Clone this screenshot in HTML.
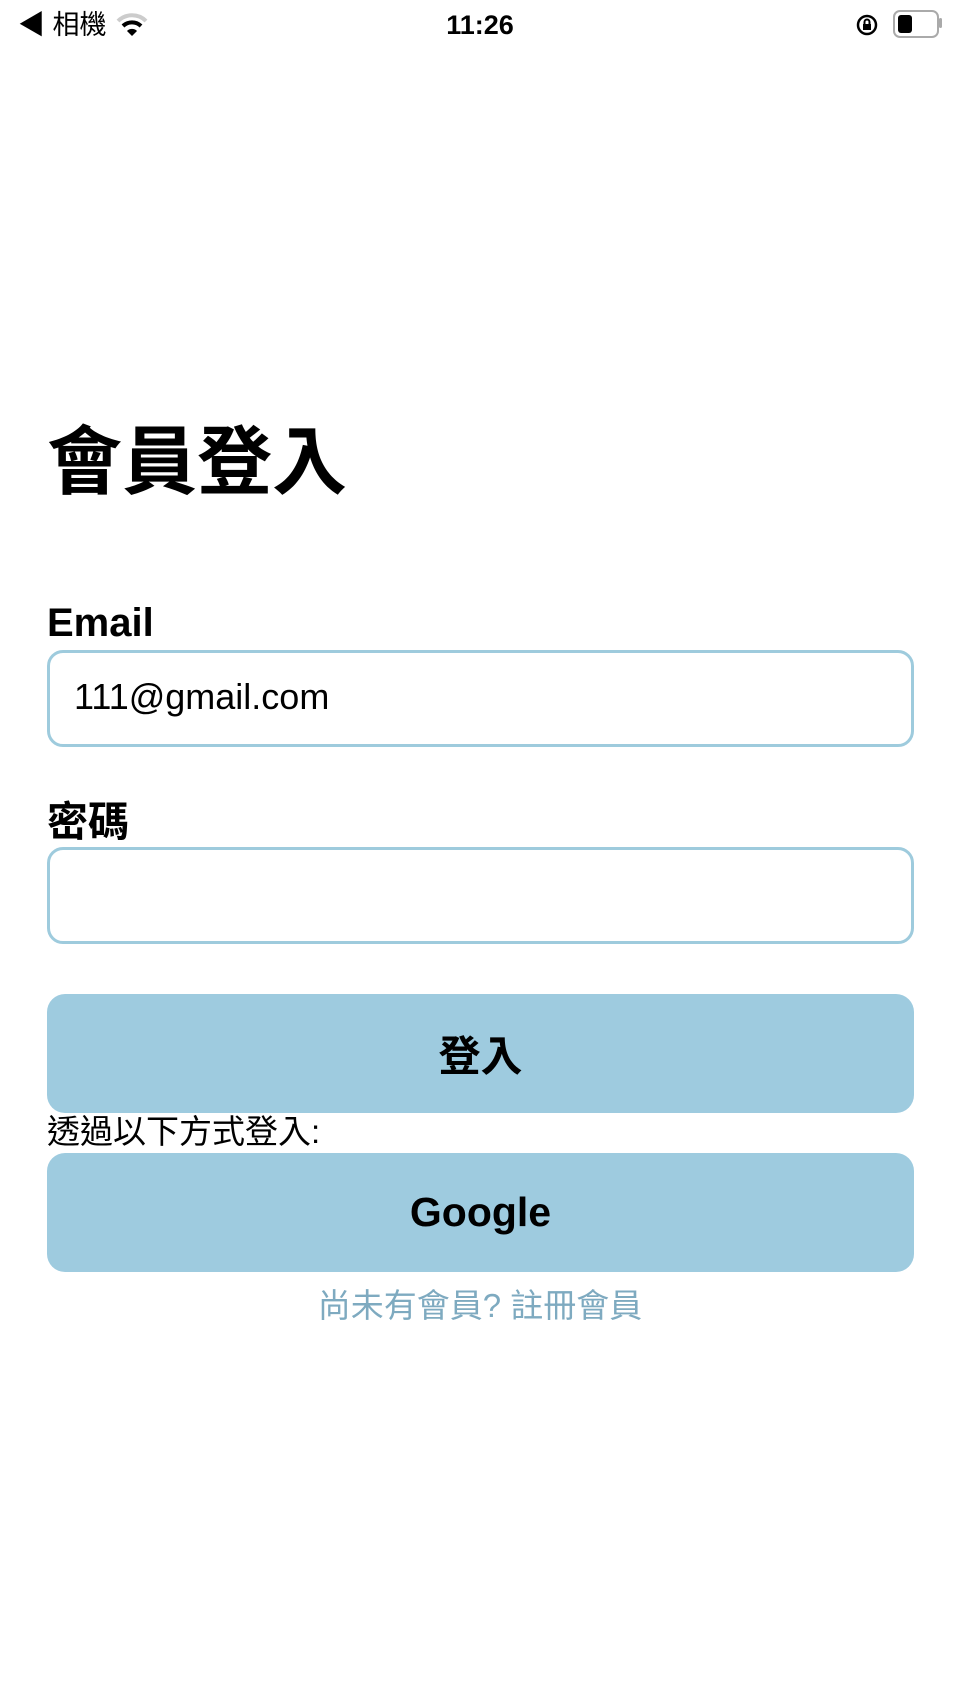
<!DOCTYPE html>
<html><head><meta charset="utf-8"><style>
body{margin:0;width:960px;height:1706px;background:#fff;position:relative;font-family:"Liberation Sans","Noto Sans CJK TC",sans-serif;color:#000;overflow:hidden}
.a{position:absolute}
.inp{position:absolute;left:47px;width:861px;height:91px;border:3px solid #9ecbdd;border-radius:16px}
.btn{position:absolute;left:47px;width:867px;height:119px;background:#9ecbdf;border-radius:18px;display:flex;align-items:center;justify-content:center;font-weight:bold}
</style></head><body>
<div class="a" style="left:18px;top:8px;font-size:27px;line-height:34px">◀ 相機</div>
<svg class="a" style="left:116px;top:10px" width="32" height="28" viewBox="0 0 32 28"><path d="M2 11a20 20 0 0 1 28 0" stroke="#ccc" stroke-width="4" fill="none"/><path d="M7 16a13 13 0 0 1 18 0" stroke="#000" stroke-width="4" fill="none"/><path d="M16 26l-5-5a7 7 0 0 1 10 0z" fill="#000"/></svg>
<div class="a" style="left:0;width:960px;text-align:center;top:8px;font-size:27px;font-weight:bold;line-height:34px">11:26</div>
<svg class="a" style="left:855px;top:13px" width="24" height="24" viewBox="0 0 24 24"><circle cx="12" cy="12" r="9" stroke="#000" stroke-width="2.5" fill="none"/><rect x="8" y="11" width="8" height="6" fill="#000"/><path d="M9.5 11v-2a2.5 2.5 0 0 1 5 0v2" stroke="#000" stroke-width="2" fill="none"/></svg>
<div class="a" style="left:893px;top:10px;width:42px;height:24px;border:2px solid #aaa;border-radius:7px"></div>
<div class="a" style="left:898px;top:15px;width:14px;height:18px;background:#000;border-radius:3px"></div>
<div class="a" style="left:939px;top:18px;width:3px;height:10px;background:#aaa;border-radius:2px"></div>
<div class="a" style="left:47px;top:417px;font-size:75px;font-weight:bold;line-height:90px">會員登入</div>
<div class="a" style="left:47px;top:601px;font-size:40px;font-weight:bold;line-height:44px">Email</div>
<div class="inp" style="top:650px"></div>
<div class="a" style="left:74px;top:677px;font-size:36px;line-height:40px">111@gmail.com</div>
<div class="a" style="left:47px;top:799px;font-size:41px;font-weight:bold;line-height:46px">密碼</div>
<div class="inp" style="top:847px"></div>
<div class="btn" style="top:994px;font-size:42px">登入</div>
<div class="a" style="left:47px;top:1113px;font-size:33px;line-height:38px">透過以下方式登入:</div>
<div class="btn" style="top:1153px;font-size:41px">Google</div>
<div class="a" style="left:0;width:960px;text-align:center;top:1287px;font-size:33px;line-height:38px;color:#7eaac0">尚未有會員? 註冊會員</div>
</body></html>
